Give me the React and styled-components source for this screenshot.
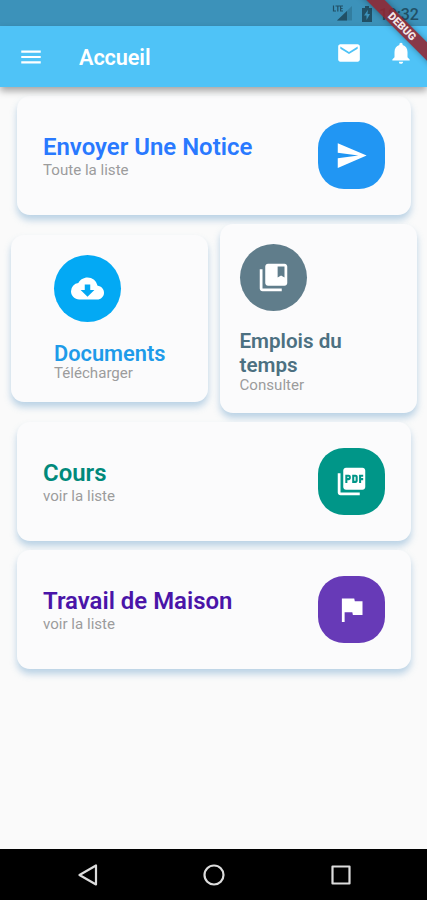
import React from "react";
import styled, { createGlobalStyle } from "styled-components";
import {
  MdMenu,
  MdEmail,
  MdNotifications,
  MdSend,
  MdCloudDownload,
  MdCollectionsBookmark,
  MdPictureAsPdf,
  MdFlag,
} from "react-icons/md";

const GlobalStyle = createGlobalStyle`
  * { box-sizing: border-box; }
  body { margin: 0; background: #fafafa; font-family: Roboto, sans-serif; }
`;

const Screen = styled.div`
  position: relative;
  width: 427px;
  height: 900px;
  display: flex;
  flex-direction: column;
  overflow: hidden;
  background: #fafafa;
`;

const StatusBar = styled.div`
  height: 26px;
  flex: none;
  display: flex;
  justify-content: flex-end;
  align-items: center;
  padding: 1px 8px 0 0;
  background: #3c92ba;
  color: #215066;
  font-size: 16px;
  font-weight: 500;
`;

const SignalIcon = styled.svg`
  width: 22px;
  height: 20px;
  margin-right: 7px;
`;

const BatteryIcon = styled.svg`
  width: 12px;
  height: 16px;
  margin-right: 6px;
`;

const Clock = styled.span`
  width: 40px;
  margin-top: 1px;
  letter-spacing: -0.2px;
  white-space: nowrap;
`;

const AppBar = styled.header`
  position: relative;
  z-index: 1;
  height: 61px;
  flex: none;
  display: flex;
  align-items: center;
  padding: 0 13px 0 18px;
  background: #4fc3f7;
  color: #fff;
  box-shadow: 0 4px 7px rgba(0, 0, 0, 0.34);
`;

const Title = styled.h1`
  flex: 1;
  margin: 3px 0 0 35px;
  font-size: 21.7px;
  font-weight: 600;
  line-height: 26px;
  letter-spacing: -0.1px;
`;

const Actions = styled.div`
  display: flex;
  gap: 26px;
  margin-top: -8px;
`;

const Content = styled.main`
  flex: 1;
  display: flex;
  flex-direction: column;
  gap: 9px;
  padding: 9px 10px 0 11px;
`;

const Card = styled.section`
  display: flex;
  border-radius: 13px;
  background: #fbfbfc;
  box-shadow: 0 5px 7px rgba(98, 155, 200, 0.42);
`;

const WideCard = styled(Card)`
  height: 119px;
  margin: 0 6px;
  padding: 0 26px;
  align-items: center;
  justify-content: space-between;
`;

const TileRow = styled.div`
  display: flex;
  align-items: center;
  justify-content: space-between;
  height: 189px;
`;

const Tile = styled(Card)`
  flex-direction: column;
  width: 197px;
  height: ${(p) => p.$height}px;
  padding: 19.5px 20px 0 ${(p) => p.$inset}px;
`;

const Badge = styled.div`
  flex: none;
  display: flex;
  align-items: center;
  justify-content: center;
  width: 67px;
  height: 67px;
  border-radius: ${(p) => (p.$round ? "50%" : "26px")};
  background: ${(p) => p.$color};
  color: #fff;
`;

const Caption = styled.div`
  margin-top: ${(p) => p.$top || 0}px;
`;

const Heading = styled.h2`
  margin: 0;
  color: ${(p) => p.$color};
  font-size: ${(p) => p.$size}px;
  font-weight: 600;
  line-height: ${(p) => p.$line}px;
`;

const Subtitle = styled.p`
  margin: 0;
  color: #9c9c9c;
  font-size: 15.1px;
  line-height: ${(p) => p.$line || 18}px;
`;

const NavBar = styled.nav`
  height: 51px;
  flex: none;
  display: flex;
  align-items: center;
  justify-content: space-between;
  padding: 0 75.5px 0 76.5px;
  background: #000;
`;

const NavIcon = styled.svg`
  width: 22px;
  height: 22px;
  fill: none;
  stroke: #dcdcdc;
  stroke-width: 2.2;
  stroke-linejoin: round;
`;

const DebugRibbon = styled.div`
  position: absolute;
  z-index: 2;
  top: 19.5px;
  left: 341.5px;
  width: 120px;
  height: 13px;
  transform: rotate(45deg);
  background: rgba(145, 36, 48, 0.88);
  box-shadow: 0 0 6px rgba(0, 0, 0, 0.35);
  color: #f4e8ea;
  font-size: 10.8px;
  font-weight: 900;
  line-height: 13px;
  text-align: center;
`;

const wideItems = {
  notice: { title: "Envoyer Une Notice", sub: "Toute la liste", color: "#2979ff", badge: "#2196f3", Icon: MdSend },
  cours: { title: "Cours", sub: "voir la liste", color: "#00897b", badge: "#009688", Icon: MdPictureAsPdf },
  travail: { title: "Travail de Maison", sub: "voir la liste", color: "#4a14a8", badge: "#673ab7", Icon: MdFlag },
};

function WideItem({ item }) {
  const { Icon } = item;
  return (
    <WideCard>
      <Caption $top={2}>
        <Heading $color={item.color} $size={23.95} $line={27}>{item.title}</Heading>
        <Subtitle>{item.sub}</Subtitle>
      </Caption>
      <Badge $color={item.badge}>
        <Icon size={33} />
      </Badge>
    </WideCard>
  );
}

export default function App() {
  return (
    <Screen>
      <GlobalStyle />
      <StatusBar>
        <SignalIcon viewBox="0 0 22 20">
          <path d="M20 2v14.500H5z" fill="#327d9f" />
          <path d="M15 7v9.500H5z" fill="#215066" />
          <path d="M1.500 1.500v5.500h2.500M3.500 2h4.500M5.800 2v5.500M11 2H8.600v5H11M8.600 4.500h2" fill="none" stroke="#215066" strokeWidth="1.200" />
        </SignalIcon>
        <BatteryIcon viewBox="0 0 12 17" preserveAspectRatio="none">
          <path fillRule="evenodd" fill="#215066" d="M4 0h4v2h3v15H1V2h3zM7 4L3 10h2.500v5L9 8.500H6.500z" />
        </BatteryIcon>
        <Clock>10:32</Clock>
      </StatusBar>
      <AppBar>
        <MdMenu size={26} />
        <Title>Accueil</Title>
        <Actions>
          <MdEmail size={26} />
          <MdNotifications size={26} />
        </Actions>
      </AppBar>
      <Content>
        <WideItem item={wideItems.notice} />
        <TileRow>
          <Tile $height={167} $inset={43}>
            <Badge $round $color="#03a9f4">
              <MdCloudDownload size={33} />
            </Badge>
            <Caption $top={20.5}>
              <Heading $color="#1e9be9" $size={21.8} $line={23}>Documents</Heading>
              <Subtitle $line={17}>Télécharger</Subtitle>
            </Caption>
          </Tile>
          <Tile $height={189} $inset={19.5}>
            <Badge $round $color="#607d8b">
              <MdCollectionsBookmark size={33} />
            </Badge>
            <Caption $top={18.5}>
              <Heading $color="#4c7081" $size={20.6} $line={24}>Emplois du temps</Heading>
              <Subtitle $line={16}>Consulter</Subtitle>
            </Caption>
          </Tile>
        </TileRow>
        <WideItem item={wideItems.cours} />
        <WideItem item={wideItems.travail} />
      </Content>
      <NavBar>
        <NavIcon viewBox="0 0 22 22">
          <path d="M19 1.500v19L2.500 11z" />
        </NavIcon>
        <NavIcon viewBox="0 0 22 22">
          <circle cx="11" cy="11" r="9.500" />
        </NavIcon>
        <NavIcon viewBox="0 0 22 22">
          <rect x="2.500" y="2.500" width="17" height="17" />
        </NavIcon>
      </NavBar>
      <DebugRibbon>DEBUG</DebugRibbon>
    </Screen>
  );
}
